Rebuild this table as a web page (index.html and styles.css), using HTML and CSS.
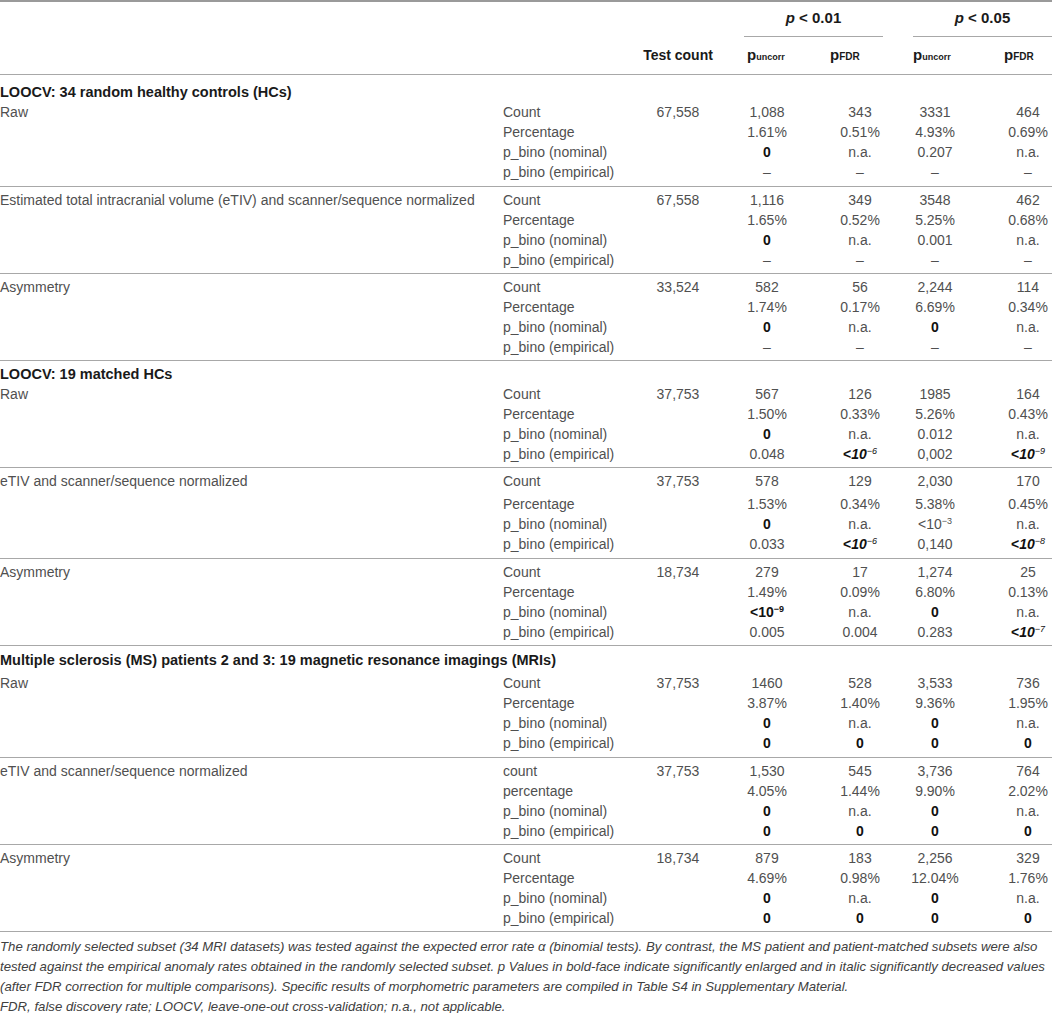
FILE: index.html
```html
<!DOCTYPE html>
<html>
<head>
<meta charset="utf-8">
<link rel="stylesheet" href="styles.css">
</head>
<body>
<div class="table">
  <div class="head1">
    <span></span>
    <span class="span-h"><i>p</i> &lt; 0.01</span>
    <span></span>
    <span class="span-h"><i>p</i> &lt; 0.05</span>
  </div>
  <div class="row head2">
    <span></span><span></span>
    <span class="tc hb">Test count</span>
    <span class="sh sh1"><b>p</b><small>uncorr</small></span>
    <span class="sh sh2"><b>p</b><small class="sc">FDR</small></span>
    <span class="sh sh3"><b>p</b><small>uncorr</small></span>
    <span class="sh sh4"><b>p</b><small class="sc">FDR</small></span>
  </div>

  <div class="title t1">LOOCV: 34 random healthy controls (HCs)</div>
  <div class="group first">
    <div class="row"><span class="name">Raw</span><span class="lab">Count</span><span class="tc">67,558</span><span class="v v1">1,088</span><span class="v v2">343</span><span class="v v3">3331</span><span class="v v4">464</span></div>
    <div class="row"><span></span><span class="lab">Percentage</span><span></span><span class="v v1">1.61%</span><span class="v v2">0.51%</span><span class="v v3">4.93%</span><span class="v v4">0.69%</span></div>
    <div class="row"><span></span><span class="lab">p_bino (nominal)</span><span></span><span class="v v1"><b>0</b></span><span class="v v2">n.a.</span><span class="v v3">0.207</span><span class="v v4">n.a.</span></div>
    <div class="row"><span></span><span class="lab">p_bino (empirical)</span><span></span><span class="v v1">–</span><span class="v v2">–</span><span class="v v3">–</span><span class="v v4">–</span></div>
  </div>
  <div class="group">
    <div class="row"><span class="name">Estimated total intracranial volume (eTIV) and scanner/sequence normalized</span><span class="lab">Count</span><span class="tc">67,558</span><span class="v v1">1,116</span><span class="v v2">349</span><span class="v v3">3548</span><span class="v v4">462</span></div>
    <div class="row"><span></span><span class="lab">Percentage</span><span></span><span class="v v1">1.65%</span><span class="v v2">0.52%</span><span class="v v3">5.25%</span><span class="v v4">0.68%</span></div>
    <div class="row"><span></span><span class="lab">p_bino (nominal)</span><span></span><span class="v v1"><b>0</b></span><span class="v v2">n.a.</span><span class="v v3">0.001</span><span class="v v4">n.a.</span></div>
    <div class="row"><span></span><span class="lab">p_bino (empirical)</span><span></span><span class="v v1">–</span><span class="v v2">–</span><span class="v v3">–</span><span class="v v4">–</span></div>
  </div>
  <div class="group">
    <div class="row"><span class="name">Asymmetry</span><span class="lab">Count</span><span class="tc">33,524</span><span class="v v1">582</span><span class="v v2">56</span><span class="v v3">2,244</span><span class="v v4">114</span></div>
    <div class="row"><span></span><span class="lab">Percentage</span><span></span><span class="v v1">1.74%</span><span class="v v2">0.17%</span><span class="v v3">6.69%</span><span class="v v4">0.34%</span></div>
    <div class="row"><span></span><span class="lab">p_bino (nominal)</span><span></span><span class="v v1"><b>0</b></span><span class="v v2">n.a.</span><span class="v v3"><b>0</b></span><span class="v v4">n.a.</span></div>
    <div class="row"><span></span><span class="lab">p_bino (empirical)</span><span></span><span class="v v1">–</span><span class="v v2">–</span><span class="v v3">–</span><span class="v v4">–</span></div>
  </div>

  <div class="title t2">LOOCV: 19 matched HCs</div>
  <div class="group first">
    <div class="row"><span class="name">Raw</span><span class="lab">Count</span><span class="tc">37,753</span><span class="v v1">567</span><span class="v v2">126</span><span class="v v3">1985</span><span class="v v4">164</span></div>
    <div class="row"><span></span><span class="lab">Percentage</span><span></span><span class="v v1">1.50%</span><span class="v v2">0.33%</span><span class="v v3">5.26%</span><span class="v v4">0.43%</span></div>
    <div class="row"><span></span><span class="lab">p_bino (nominal)</span><span></span><span class="v v1"><b>0</b></span><span class="v v2">n.a.</span><span class="v v3">0.012</span><span class="v v4">n.a.</span></div>
    <div class="row"><span></span><span class="lab">p_bino (empirical)</span><span></span><span class="v v1">0.048</span><span class="v v2"><span class="bi">&lt;<i>10</i><sup>−6</sup></span></span><span class="v v3">0,002</span><span class="v v4"><span class="bi">&lt;<i>10</i><sup>−9</sup></span></span></div>
  </div>
  <div class="group tall">
    <div class="row row-gap"><span class="name">eTIV and scanner/sequence normalized</span><span class="lab">Count</span><span class="tc">37,753</span><span class="v v1">578</span><span class="v v2">129</span><span class="v v3">2,030</span><span class="v v4">170</span></div>
    <div class="row"><span></span><span class="lab">Percentage</span><span></span><span class="v v1">1.53%</span><span class="v v2">0.34%</span><span class="v v3">5.38%</span><span class="v v4">0.45%</span></div>
    <div class="row"><span></span><span class="lab">p_bino (nominal)</span><span></span><span class="v v1"><b>0</b></span><span class="v v2">n.a.</span><span class="v v3">&lt;10<sup class="reg">−3</sup></span><span class="v v4">n.a.</span></div>
    <div class="row"><span></span><span class="lab">p_bino (empirical)</span><span></span><span class="v v1">0.033</span><span class="v v2"><span class="bi">&lt;<i>10</i><sup>−6</sup></span></span><span class="v v3">0,140</span><span class="v v4"><span class="bi">&lt;<i>10</i><sup>−8</sup></span></span></div>
  </div>
  <div class="group">
    <div class="row"><span class="name">Asymmetry</span><span class="lab">Count</span><span class="tc">18,734</span><span class="v v1">279</span><span class="v v2">17</span><span class="v v3">1,274</span><span class="v v4">25</span></div>
    <div class="row"><span></span><span class="lab">Percentage</span><span></span><span class="v v1">1.49%</span><span class="v v2">0.09%</span><span class="v v3">6.80%</span><span class="v v4">0.13%</span></div>
    <div class="row"><span></span><span class="lab">p_bino (nominal)</span><span></span><span class="v v1"><b>&lt;10<sup class="bsup">−9</sup></b></span><span class="v v2">n.a.</span><span class="v v3"><b>0</b></span><span class="v v4">n.a.</span></div>
    <div class="row"><span></span><span class="lab">p_bino (empirical)</span><span></span><span class="v v1">0.005</span><span class="v v2">0.004</span><span class="v v3">0.283</span><span class="v v4"><span class="bi">&lt;<i>10</i><sup>−7</sup></span></span></div>
  </div>

  <div class="title t3">Multiple sclerosis (MS) patients 2 and 3: 19 magnetic resonance imagings (MRIs)</div>
  <div class="group first ms">
    <div class="row"><span class="name">Raw</span><span class="lab">Count</span><span class="tc">37,753</span><span class="v v1">1460</span><span class="v v2">528</span><span class="v v3">3,533</span><span class="v v4">736</span></div>
    <div class="row"><span></span><span class="lab">Percentage</span><span></span><span class="v v1">3.87%</span><span class="v v2">1.40%</span><span class="v v3">9.36%</span><span class="v v4">1.95%</span></div>
    <div class="row"><span></span><span class="lab">p_bino (nominal)</span><span></span><span class="v v1"><b>0</b></span><span class="v v2">n.a.</span><span class="v v3"><b>0</b></span><span class="v v4">n.a.</span></div>
    <div class="row"><span></span><span class="lab">p_bino (empirical)</span><span></span><span class="v v1"><b>0</b></span><span class="v v2"><b>0</b></span><span class="v v3"><b>0</b></span><span class="v v4"><b>0</b></span></div>
  </div>
  <div class="group">
    <div class="row"><span class="name">eTIV and scanner/sequence normalized</span><span class="lab">count</span><span class="tc">37,753</span><span class="v v1">1,530</span><span class="v v2">545</span><span class="v v3">3,736</span><span class="v v4">764</span></div>
    <div class="row"><span></span><span class="lab">percentage</span><span></span><span class="v v1">4.05%</span><span class="v v2">1.44%</span><span class="v v3">9.90%</span><span class="v v4">2.02%</span></div>
    <div class="row"><span></span><span class="lab">p_bino (nominal)</span><span></span><span class="v v1"><b>0</b></span><span class="v v2">n.a.</span><span class="v v3"><b>0</b></span><span class="v v4">n.a.</span></div>
    <div class="row"><span></span><span class="lab">p_bino (empirical)</span><span></span><span class="v v1"><b>0</b></span><span class="v v2"><b>0</b></span><span class="v v3"><b>0</b></span><span class="v v4"><b>0</b></span></div>
  </div>
  <div class="group">
    <div class="row"><span class="name">Asymmetry</span><span class="lab">Count</span><span class="tc">18,734</span><span class="v v1">879</span><span class="v v2">183</span><span class="v v3">2,256</span><span class="v v4">329</span></div>
    <div class="row"><span></span><span class="lab">Percentage</span><span></span><span class="v v1">4.69%</span><span class="v v2">0.98%</span><span class="v v3">12.04%</span><span class="v v4">1.76%</span></div>
    <div class="row"><span></span><span class="lab">p_bino (nominal)</span><span></span><span class="v v1"><b>0</b></span><span class="v v2">n.a.</span><span class="v v3"><b>0</b></span><span class="v v4">n.a.</span></div>
    <div class="row"><span></span><span class="lab">p_bino (empirical)</span><span></span><span class="v v1"><b>0</b></span><span class="v v2"><b>0</b></span><span class="v v3"><b>0</b></span><span class="v v4"><b>0</b></span></div>
  </div>

  <div class="notes">
    <p>The randomly selected subset (34 MRI datasets) was tested against the expected error rate α (binomial tests). By contrast, the MS patient and patient-matched subsets were also<br>tested against the empirical anomaly rates obtained in the randomly selected subset. p Values in bold-face indicate significantly enlarged and in italic significantly decreased values<br>(after FDR correction for multiple comparisons). Specific results of morphometric parameters are compiled in Table S4 in Supplementary Material.</p>
    <p>FDR, false discovery rate; LOOCV, leave-one-out cross-validation; n.a., not applicable.</p>
  </div>
</div>
</body>
</html>
```

FILE: styles.css
```css
html, body {
  margin: 0;
  padding: 0;
  background: #ffffff;
}

body {
  font-family: "Liberation Sans", Arial, sans-serif;
  font-size: 14px;
  color: #505050;
  width: 1052px;
}

.table {
  width: 1052px;
  border-top: 2px solid #9a9a9a;
}

.head1 {
  display: grid;
  grid-template-columns: 744px 139px 30px 139px;
}

.span-h {
  text-align: center;
  font-weight: bold;
  font-size: 15px;
  line-height: 20px;
  padding: 6px 0 8px;
  border-bottom: 1px solid #a8a8a8;
  color: #1a1a1a;
}

.row {
  display: grid;
  grid-template-columns: 503px 122px 106px 72px 97px 104px 48px;
  line-height: 20px;
  height: 20px;
  white-space: nowrap;
}

.head2 {
  height: auto;
  padding: 8px 0 7px;
  border-bottom: 1px solid #a8a8a8;
}

.hb {
  font-weight: bold;
  color: #1a1a1a;
}

.sh {
  text-align: left;
  color: #1a1a1a;
}

.sh b {
  font-size: 15px;
}

.sh small {
  font-size: 9px;
  font-weight: bold;
}

.sh small.sc {
  font-size: 10px;
}

.sh1 { padding-left: 16px; }
.sh2 { padding-left: 27px; }
.sh3 { padding-left: 13px; }
.sh4 { padding-left: 0; }

.title {
  font-weight: bold;
  font-size: 14.5px;
  color: #1a1a1a;
  line-height: 20px;
  white-space: nowrap;
}

.t1 { padding-top: 7px; }
.t2 { padding-top: 3px; }
.t3 { padding-top: 4px; padding-bottom: 3px; }

.group {
  padding: 3px 0;
  border-bottom: 1px solid #a8a8a8;
}

.group.first {
  padding-top: 0;
}

.t1 + .group.first {
  padding-bottom: 4px;
}

.group.tall {
  padding-bottom: 4px;
}

.row-gap {
  margin-bottom: 3px;
}

.group.ms {
  padding-bottom: 4px;
}

.tc {
  text-align: center;
}

.v {
  text-align: center;
}

.v2 { padding-left: 17px; }
.v3 { padding-right: 34px; }

.v b {
  color: #111111;
}

.bi {
  font-weight: bold;
  color: #111111;
}

.bi i {
  font-style: italic;
}

sup {
  font-size: 9px;
  line-height: 0;
  vertical-align: 5px;
}

.bi sup {
  font-weight: normal;
  font-style: italic;
}

sup.bsup {
  font-weight: bold;
}

.notes {
  padding-top: 5px;
  font-family: "Liberation Sans Narrow", "Liberation Sans", Arial, sans-serif;
  font-style: italic;
  font-size: 13.2px;
  line-height: 20px;
  color: #404040;
}

.notes p {
  margin: 0;
  white-space: nowrap;
}
```
